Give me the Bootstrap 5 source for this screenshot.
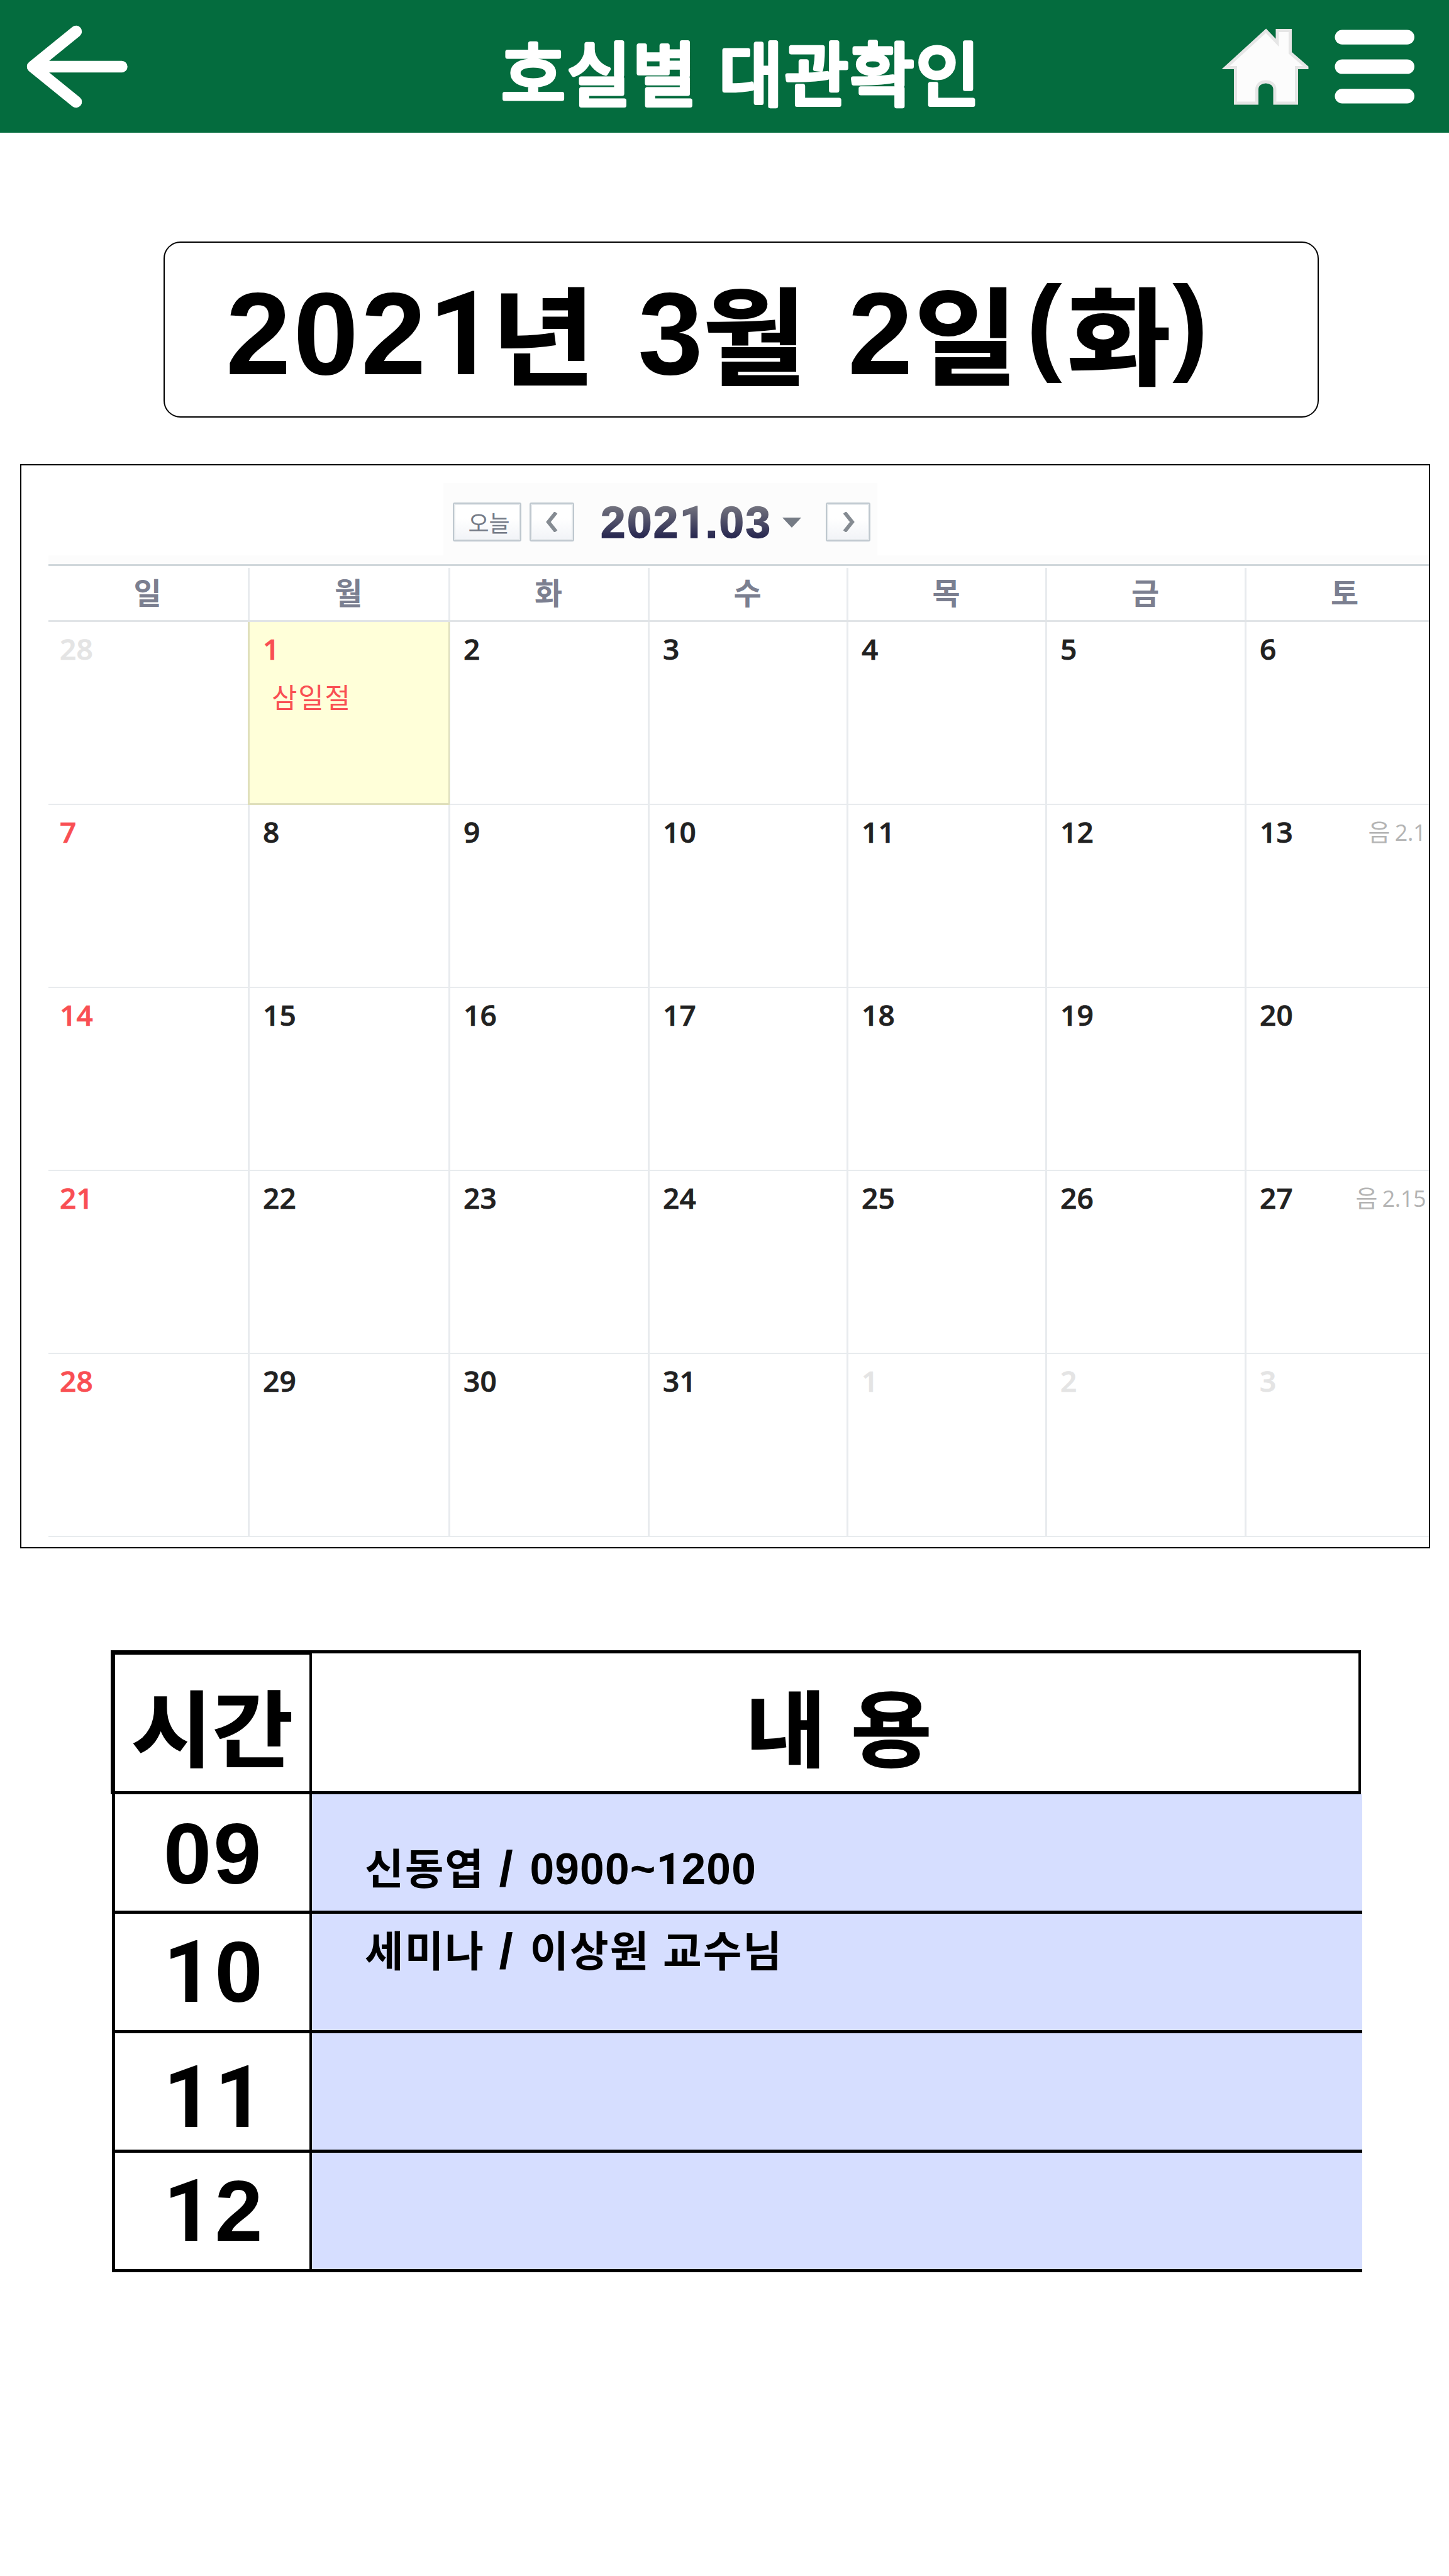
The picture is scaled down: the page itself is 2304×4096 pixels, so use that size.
<!DOCTYPE html>
<html lang="ko">
<head>
<meta charset="utf-8">
<meta name="viewport" content="width=device-width, initial-scale=1">
<title>호실별 대관확인</title>
<link href="https://cdn.jsdelivr.net/npm/bootstrap@5.3.0/dist/css/bootstrap.min.css" rel="stylesheet">
<style>
  body { width: 2304px; height: 4096px; background: #fff; color: #000; overflow: hidden; font-family: "Liberation Sans", "Noto Sans CJK KR", sans-serif; }
  .topbar { height: 211px; background: #046c3e; display: grid; grid-template-columns: 780px 1160px 174px 190px; }
  .topbar svg { display: block; overflow: visible; }
  .app-title { font-family: "Noto Sans CJK KR", sans-serif; font-weight: 400; font-size: 111px; fill: #fff; stroke: #fff; stroke-width: 7px; stroke-linejoin: round; }
  .ko { font-family: "Noto Sans CJK KR", sans-serif; line-height: 0; }
  .one { font-family: Roboto, "Liberation Sans", sans-serif; line-height: 0; letter-spacing: 0; }

  .date-box { width: 1837px; height: 280px; margin: 173px 0 0 260px; border: 2px solid #000; border-radius: 27px; padding: 65px 0 0 97px; font-weight: 700; font-size: 186px; line-height: 160px; letter-spacing: 4px; white-space: nowrap; }
  .date-box .ko { display: inline-block; font-size: 168px; letter-spacing: 0; transform: scaleX(1.07); margin: 0 8px 0 9px; vertical-align: -4px; -webkit-text-stroke: 2px #000; }
  .date-box .ko-year { margin: 0 17px 0 -1px; }
  .date-box .ko-month { margin: 0 15px 0 1px; }
  .date-box .ko-day { margin: 0 18px 0 4px; }
  .paren { font-size: 170px; line-height: 0; vertical-align: 21px; }

  .cal-frame { width: 2242px; height: 1724px; margin: 74px 0 0 32px; border: 2px solid #000; padding-left: 43px; overflow: hidden; }
  .cal-top { height: 157px; padding: 28px 0 0 628px; }
  .cal-tools { width: 690px; height: 129px; background: #fcfcfc; padding: 31px 0 0 15px; }
  .cal-strip { height: 14px; margin-top: -14px; background: #fcfcfc; width: 2230px; }
  .cal-btn { height: 62px; border: 2px solid #bfc8cf; border-radius: 3px; box-shadow: inset 0 0 0 2px #e4e8eb; background: linear-gradient(#fff 40%, #f1f3f7); padding: 0; }
  .btn-today { width: 109px; margin-right: 13px; padding-left: 6px; color: #747a86; font: 400 36px/58px "Noto Sans CJK KR", sans-serif; }
  .btn-step { width: 71px; }
  .month-label { width: 274px; margin-left: 42px; margin-right: -4px; font-weight: 700; font-size: 71px; line-height: 64px; letter-spacing: 2.4px; white-space: nowrap; background: linear-gradient(#74747f 8%, #26264f 88%); -webkit-background-clip: text; background-clip: text; color: transparent; -webkit-text-stroke: 1.5px transparent; }
  .month-caret { width: 30px; height: 16px; margin-left: 19px; margin-right: 39px; }

  .week-names, .week-row { display: grid; grid-template-columns: 317px 319px 317px 316px 316px 317px 317px; width: 2219px; }
  .week-names { height: 92px; border-top: 3px solid #d0d7db; border-bottom: 3px solid #e1e4e7; font: 700 48px/75px "Noto Sans CJK KR", sans-serif; color: #7b7f90; text-align: center; }
  .week-names > div { border-left: 3px solid #e8ebee; margin-top: 3px; padding-right: 2px; }
  .week-row { height: 291px; font: 600 46px/48px "Open Sans", sans-serif; color: #212121; -webkit-text-stroke: .7px; letter-spacing: .3px; }
  .week-row > div { border-left: 3px solid #e8ebee; border-bottom: 2px solid #e8ebee; padding: 18px 0 0 21px; }
  .week-names > div:first-child, .week-row > div:first-child { border-left-width: 0; }
  .week-row > div:first-child { padding-left: 18px; color: #f94f53; }
  .week-row > .holiday { background: #ffffd9; border: solid #dfdfbb; border-width: 0 2px 3px 3px; color: #f94f53; margin-right: -2px; z-index: 1; }
  .holiday .ko { font-weight: 400; font-size: 44px; line-height: 60px; padding: 22px 0 0 14px; letter-spacing: 1.8px; -webkit-text-stroke: 0; }
  .week-row > .dim, .week-row > .dim:first-child { color: #e4e4e4; }
  .lunar { font-weight: 400; font-size: 36px; line-height: 51px; color: #b4b4b4; margin-right: 29px; white-space: nowrap; word-spacing: -1px; letter-spacing: -.5px; -webkit-text-stroke: 0; }
  .lunar .ko { font-weight: 400; font-size: 38px; }

  .slots { margin: 162px 0 0 176px; width: 1990px; }
  .slot-head { height: 229px; width: 1988px; border: solid #000; border-width: 5px 4px 5px 7px; font-weight: 700; font-size: 132px; line-height: 132px; }
  .slot-head .ko { display: inline-block; line-height: 132px; transform: scaleX(1.06); -webkit-text-stroke: 1.5px #000; }
  .slot-head .head-time { width: 313px; border-right: 4px solid #000; border-top: 2px solid #000; text-align: center; padding-top: 45px; }
  .slot-head .head-body { padding: 47px 0 0 689px; white-space: pre; }
  .slot-head .head-body .ko { transform-origin: left; }
  .slot-row { height: 190px; margin-left: 2px; border-bottom: 5px solid #000; font-weight: 700; }
  .slot-time { width: 318px; border: solid #000; border-width: 0 4px 0 5px; font-size: 137px; letter-spacing: 3px; line-height: 100px; padding-left: 77px; }
  .slot-time .one { letter-spacing: 3px; }
  .slot-body { background: #d6deff; padding-left: 84px; font-size: 69.5px; line-height: 70px; letter-spacing: 1.2px; white-space: nowrap; }
  .slot-body .ko { font-size: 67px; letter-spacing: 2px; }
  .slash { font-size: 80px; line-height: 0; vertical-align: -3px; margin: 0 5px 0 2px; }
  .drop-45 { padding-top: 45px; }
  .drop-42 { padding-top: 43px; }
  .drop-51 { padding-top: 52px; }
  .drop-84 { padding-top: 84px; }
  .drop-24 { padding-top: 25px; }
</style>
</head>
<body>
<header class="topbar">
  <svg width="780" height="211" viewBox="0 0 780 211" fill="none" stroke="#fff" stroke-width="18.5" stroke-linecap="round" stroke-linejoin="round" role="img" aria-label="뒤로"><path d="M121 50 52 106 121 162M54 106H193.500"/></svg>
  <svg width="1160" height="211" viewBox="780 0 1160 211"><text class="app-title" x="797" y="160" textLength="761">호실별 대관확인</text></svg>
  <svg width="174" height="211" viewBox="1940 0 174 211" role="img" aria-label="홈"><path d="M2013 49 2031 68V48.500H2051.500V84L2078 107V107.500H2061.500V164H2027V142C2027 126 1998.500 126 1998.500 142V164H1964.500V107.500H1949Z" fill="#fcfcfc" stroke="#e6e6e6" stroke-width="5"/></svg>
  <svg width="190" height="211" viewBox="2114 0 190 211" fill="#fff" role="img" aria-label="메뉴"><rect x="2122.500" y="47.500" width="126.500" height="23.200" rx="11.600"/><rect x="2122.500" y="94.400" width="126.500" height="23.200" rx="11.600"/><rect x="2122.500" y="141.300" width="126.500" height="23.200" rx="11.600"/></svg>
</header>

<main>
  <h1 class="date-box">202<span class="one">1</span><span class="ko ko-year">년</span> 3<span class="ko ko-month">월</span> 2<span class="ko ko-day">일</span><span class="paren">(</span><span class="ko">화</span><span class="paren">)</span></h1>

  <section class="cal-frame">
    <div class="cal-top">
      <div class="cal-tools d-flex align-items-start">
        <button class="cal-btn btn-today">오늘</button>
        <button class="cal-btn btn-step"><svg class="d-block mx-auto" width="20" height="32" viewBox="0 0 20 32" fill="none" stroke="#858b92" stroke-width="6"><path d="M16 1 4 16 16 31"/></svg></button>
        <div class="month-label">202<span class="one">1</span>.03</div>
        <svg class="month-caret align-self-start mt-4" viewBox="0 0 30 16"><path d="M0 0H30L15 16Z" fill="#757b85"/></svg>
        <button class="cal-btn btn-step"><svg class="d-block mx-auto" width="20" height="32" viewBox="0 0 20 32" fill="none" stroke="#858b92" stroke-width="6"><path d="M4 1 16 16 4 31"/></svg></button>
      </div>
    </div>
    <div class="cal-strip"></div>
    <div class="week-names"><div>일</div><div>월</div><div>화</div><div>수</div><div>목</div><div>금</div><div>토</div></div>
    <div class="week-row"><div class="dim">28</div><div class="holiday">1<div class="ko">삼일절</div></div><div>2</div><div>3</div><div>4</div><div>5</div><div>6</div></div>
    <div class="week-row"><div>7</div><div>8</div><div>9</div><div>10</div><div>11</div><div>12</div><div class="d-flex justify-content-between">13<span class="lunar"><span class="ko">음</span> 2.1</span></div></div>
    <div class="week-row"><div>14</div><div>15</div><div>16</div><div>17</div><div>18</div><div>19</div><div>20</div></div>
    <div class="week-row"><div>21</div><div>22</div><div>23</div><div>24</div><div>25</div><div>26</div><div class="d-flex justify-content-between">27<span class="lunar"><span class="ko">음</span> 2.15</span></div></div>
    <div class="week-row"><div>28</div><div>29</div><div>30</div><div>31</div><div class="dim">1</div><div class="dim">2</div><div class="dim">3</div></div>
  </section>

  <section class="slots">
    <div class="slot-head d-flex"><div class="head-time"><span class="ko">시간</span></div><div class="head-body"><span class="ko">내 용</span></div></div>
    <div class="slot-row d-flex"><div class="slot-time drop-45">09</div><div class="slot-body flex-grow-1 drop-84"><span class="ko">신동엽</span> <span class="slash">/</span> 0900~<span class="one">1</span>200</div></div>
    <div class="slot-row d-flex"><div class="slot-time drop-42"><span class="one">1</span>0</div><div class="slot-body flex-grow-1 drop-24"><span class="ko">세미나</span> <span class="slash">/</span> <span class="ko">이상원 교수님</span></div></div>
    <div class="slot-row d-flex"><div class="slot-time drop-51"><span class="one">11</span></div><div class="slot-body flex-grow-1"></div></div>
    <div class="slot-row d-flex"><div class="slot-time drop-42"><span class="one">1</span>2</div><div class="slot-body flex-grow-1"></div></div>
  </section>
</main>
<script src="https://cdn.jsdelivr.net/npm/bootstrap@5.3.0/dist/js/bootstrap.bundle.min.js"></script>
</body>
</html>
